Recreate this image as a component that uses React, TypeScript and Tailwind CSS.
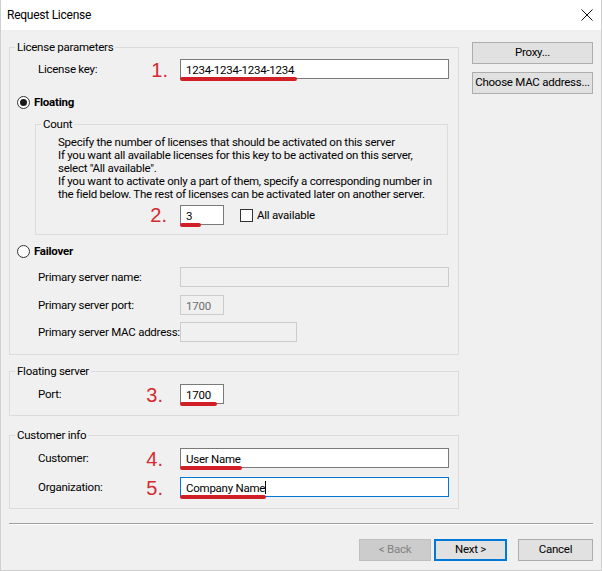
import React from 'react';

function Mark({ n, className }: { n: string; className: string }) {
  return (
    <span className={`ml-auto font-['Liberation_Sans',sans-serif] text-[20px] leading-[20px] tracking-normal text-[#d42a30] ${className}`}>
      {n}
    </span>
  );
}

function Field({
  value,
  className = 'flex-1',
  line,
  disabled,
  focused,
  caret,
}: {
  value?: string;
  className?: string;
  line?: string;
  disabled?: boolean;
  focused?: boolean;
  caret?: boolean;
}) {
  const look = disabled
    ? 'bg-[#f0f0f0] border-[#cccccc] text-[#6d6d6d]'
    : focused
    ? 'bg-white border-[#0078d7]'
    : 'bg-white border-[#7a7a7a]';
  return (
    <div className={`relative h-[20px] border flex items-center pl-[5px] whitespace-nowrap ${look} ${className}`}>
      <span className="pt-[1px] leading-[18px]">{value}</span>
      {caret && <span className="w-px h-[13px] bg-black" />}
      {line && <div className={`absolute left-[-1px] bottom-[-3px] h-[4px] rounded-full bg-[#d01f27] ${line}`} />}
    </div>
  );
}

function Radio({ checked, label }: { checked?: boolean; label: string }) {
  return (
    <div className="h-[16px] flex items-center pl-[7px] gap-[4px]">
      <span className="w-[13px] h-[13px] rounded-full border border-[#333333] bg-white flex items-center justify-center">
        {checked && <span className="w-[7px] h-[7px] rounded-full bg-[#1a1a1a]" />}
      </span>
      <span className="pt-[1px] font-bold">{label}</span>
    </div>
  );
}

function Group({ title, className, children }: { title: string; className: string; children: React.ReactNode }) {
  return (
    <fieldset className={`border border-[#dcdcdc] p-0 min-w-0 ${className}`}>
      <legend className="ml-[5px] px-[2px] leading-[14px]">{title}</legend>
      {children}
    </fieldset>
  );
}

function Row({ label, children, className }: { label: React.ReactNode; children: React.ReactNode; className: string }) {
  return (
    <div className={`h-[20px] flex items-center pl-[28px] pr-[9px] ${className}`}>
      <div className="w-[142px] shrink-0 pt-[2px] flex items-center whitespace-nowrap">{label}</div>
      {children}
    </div>
  );
}

function Button({ children, className }: { children: React.ReactNode; className: string }) {
  return <div className={`h-[22px] flex items-center justify-center border whitespace-nowrap ${className}`}>{children}</div>;
}

export default function App() {
  return (
    <div className="w-[602px] h-[571px] bg-[#f0f0f0] font-['Roboto',sans-serif] text-[11.5px] tracking-[-0.25px] text-black border-x border-b border-[#cfcfcf] flex flex-col">
      <div className="h-[30px] bg-white flex items-center pl-[6px] pr-[8px]">
        <span className="text-[12px]">Request License</span>
        <svg className="ml-auto" width="12" height="12" viewBox="0 0 12 12">
          <path d="M0.5 0.5 L11.5 11.5 M11.5 0.5 L0.5 11.5" stroke="#111" strokeWidth="1" />
        </svg>
      </div>

      <div className="flex flex-col px-[8px] pt-[10px]">
        <div className="flex">
          <div className="w-[450px] flex flex-col">
            <Group title="License parameters" className="">
              <Row className="mt-[5px]" label={<>License key:<Mark n="1." className="mr-[12px]" /></>}>
                <Field value="1234-1234-1234-1234" line="w-[117px]" />
              </Row>

              <div className="mt-[15px]">
                <Radio checked label="Floating" />
              </div>

              <Group title="Count" className="mt-[7px] ml-[25px] mr-[10px]">
                <div className="mt-[5px] pl-[22px] leading-[13px] whitespace-nowrap">
                  <div>Specify the number of licenses that should be activated on this server</div>
                  <div>If you want all available licenses for this key to be activated on this server,</div>
                  <div>select "All available".</div>
                  <div>If you want to activate only a part of them, specify a corresponding number in</div>
                  <div>the field below. The rest of licenses can be activated later on another server.</div>
                </div>
                <div className="mt-[4px] mb-[9px] h-[20px] flex items-center">
                  <div className="w-[144px] flex">
                    <Mark n="2." className="mr-[13px]" />
                  </div>
                  <Field value="3" className="w-[44px]" line="w-[21px]" />
                  <span className="ml-[16px] w-[13px] h-[13px] border border-[#333333] bg-white" />
                  <span className="ml-[4px] pt-[2px]">All available</span>
                </div>
              </Group>

              <div className="mt-[8px]">
                <Radio label="Failover" />
              </div>
              <Row className="mt-[8px]" label="Primary server name:">
                <Field disabled />
              </Row>
              <Row className="mt-[8px]" label="Primary server port:">
                <Field disabled value="1700" className="w-[44px]" />
              </Row>
              <Row className="mt-[7px] mb-[12px]" label="Primary server MAC address:">
                <Field disabled className="w-[117px]" />
              </Row>
            </Group>

            <Group title="Floating server" className="mt-[9px]">
              <Row className="mt-[6px] mb-[11px]" label={<>Port:<Mark n="3." className="mr-[17px]" /></>}>
                <Field value="1700" className="w-[44px]" line="w-[37px]" />
              </Row>
            </Group>

            <Group title="Customer info" className="mt-[12px]">
              <Row className="mt-[6px]" label={<>Customer:<Mark n="4." className="mr-[17px]" /></>}>
                <Field value="User Name" line="w-[62px]" />
              </Row>
              <Row className="mt-[9px] mb-[11px]" label={<>Organization:<Mark n="5." className="mr-[17px]" /></>}>
                <Field value="Company Name" focused caret line="w-[86px]" />
              </Row>
            </Group>
          </div>

          <div className="ml-[13px] w-[121px] pt-[2px] flex flex-col gap-[8px]">
            <Button className="h-[21px] bg-[#e1e1e1] border-[#adadad]">Proxy...</Button>
            <Button className="h-[21px] bg-[#e1e1e1] border-[#adadad]">Choose MAC address...</Button>
          </div>
        </div>

        <div className="mt-[14px] border-t border-t-[#a0a0a0] border-b border-b-white" />

        <div className="mt-[14px] flex justify-end">
          <Button className="w-[72px] bg-[#cccccc] border-[#bfbfbf] text-[#838383]">&lt; Back</Button>
          <Button className="ml-[3px] w-[73px] bg-[#e1e1e1] border-2 border-[#0078d7]">Next &gt;</Button>
          <Button className="ml-[11px] w-[75px] bg-[#e1e1e1] border-[#adadad]">Cancel</Button>
        </div>
      </div>
    </div>
  );
}
